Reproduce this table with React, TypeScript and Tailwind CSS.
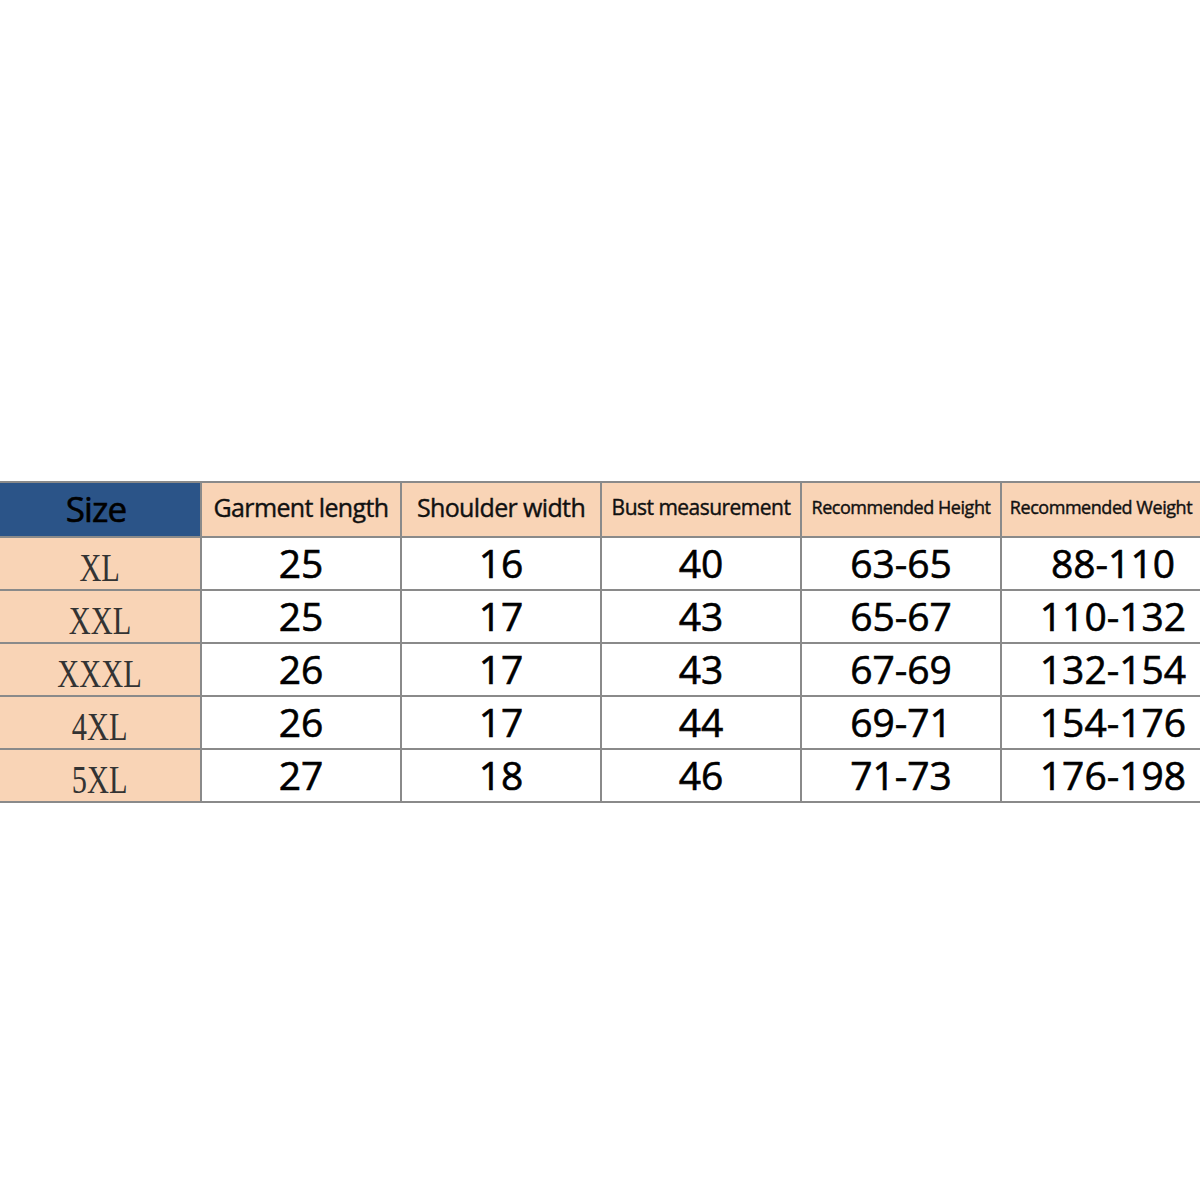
const HEADERS = [
  { label: "Garment length", size: "text-[25px]" },
  { label: "Shoulder width", size: "text-[25px]" },
  { label: "Bust measurement", size: "text-[21px]" },
  { label: "Recommended Height", size: "text-[18px]" },
  { label: "Recommended Weight", size: "text-[18px]" },
];

const ROWS = [
  ["XL", "25", "16", "40", "63-65", "88-110"],
  ["XXL", "25", "17", "43", "65-67", "110-132"],
  ["XXXL", "26", "17", "43", "67-69", "132-154"],
  ["4XL", "26", "17", "44", "69-71", "154-176"],
  ["5XL", "27", "18", "46", "71-73", "176-198"],
];

const sans = "font-['Open_Sans','Noto_Sans',sans-serif]";

export default function App() {
  return (
    <div className="h-[1200px] w-[1200px] bg-white pt-[481px]">
      <div className="grid grid-cols-[200px_200px_200px_200px_200px_200px] border-t-2 border-b-2 border-[#8a8a8a]">
        {/* Header */}
        <div className={`flex h-[53px] items-center justify-center bg-[#2b5488] text-[35px] tracking-tight text-black [-webkit-text-stroke:0.6px_black] ${sans}`}>
          <span className="-ml-2">Size</span>
        </div>
        {HEADERS.map((h) => (
          <div
            key={h.label}
            className={`flex h-[53px] items-center justify-center border-l-2 border-[#8a8a8a] bg-[#f9d4b6] pb-1 tracking-tight text-[#111] [-webkit-text-stroke:0.4px_#111] ${h.size} ${sans}`}
          >
            {h.label}
          </div>
        ))}

        {/* Body */}
        {ROWS.map((row) =>
          row.map((cell, i) =>
            i === 0 ? (
              <div
                key={row[0] + i}
                className="flex h-[53px] items-center justify-center border-t-2 border-[#8a8a8a] bg-[#f9d4b6] pt-2 font-['Liberation_Serif',serif] text-[40px] text-[#333]"
              >
                <span className="inline-block [transform:scaleX(0.76)]">{cell}</span>
              </div>
            ) : (
              <div
                key={row[0] + i}
                className={`flex h-[53px] items-center justify-center border-t-2 border-l-2 border-[#8a8a8a] bg-white text-[39px] text-black [-webkit-text-stroke:0.6px_black] ${sans} ${i === 5 ? "pl-6" : ""}`}
              >
                {cell}
              </div>
            )
          )
        )}
      </div>
    </div>
  );
}
